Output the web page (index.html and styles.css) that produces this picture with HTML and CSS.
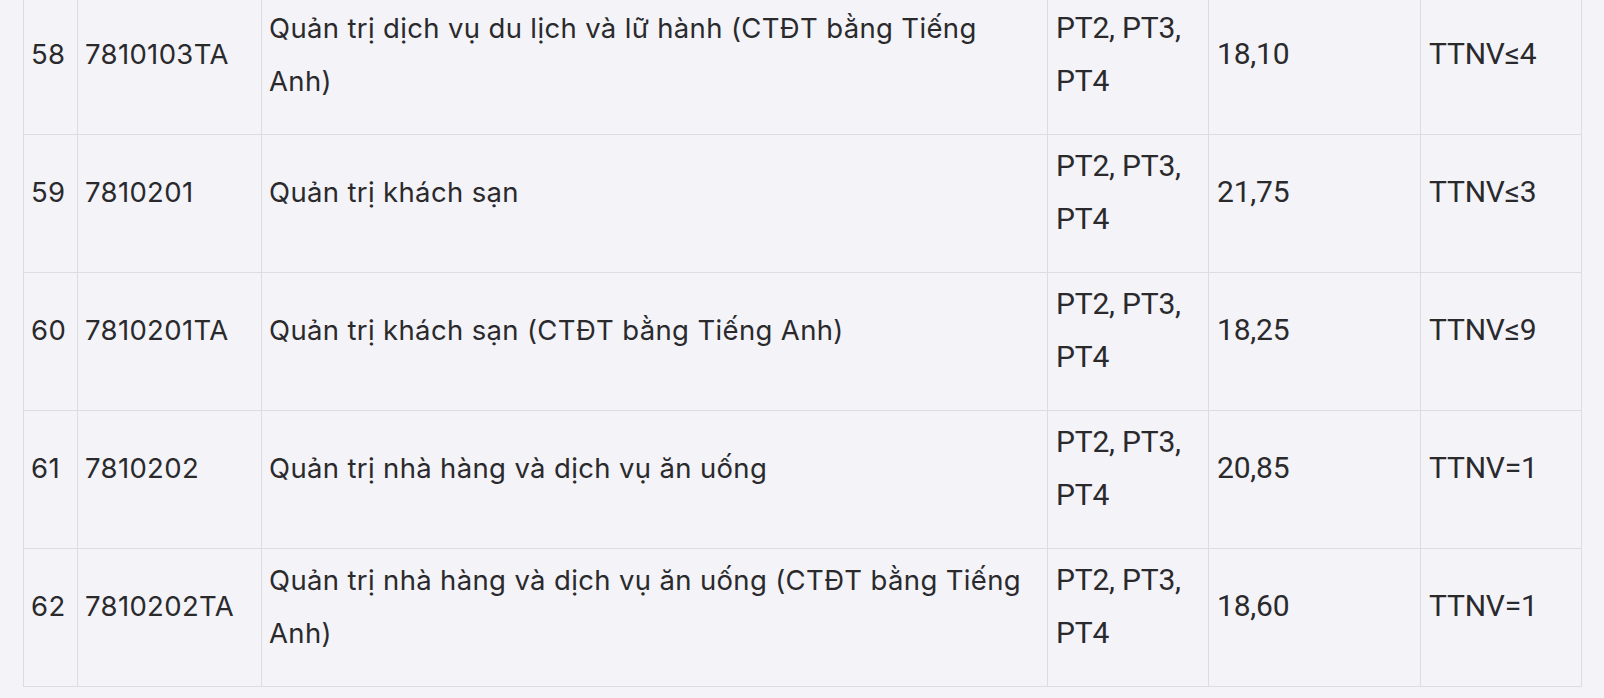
FILE: index.html
```html
<!DOCTYPE html>
<html lang="vi">
<head>
<meta charset="utf-8">
<title>Điểm chuẩn</title>
<link rel="stylesheet" href="styles.css">
</head>
<body>
<div class="page">
  <table class="scores">
    <colgroup>
      <col class="c-stt"><col class="c-code"><col class="c-name"><col class="c-method"><col class="c-score"><col class="c-cond">
    </colgroup>
    <tbody>
      <tr>
        <td class="sans">58</td>
        <td class="sans">7810103TA</td>
        <td class="sans">Quản trị dịch vụ du lịch và lữ hành (CTĐT bằng Tiếng Anh)</td>
        <td class="alt">PT2, PT3, PT4</td>
        <td class="alt">18,10</td>
        <td class="alt">TTNV≤4</td>
      </tr>
      <tr>
        <td class="sans">59</td>
        <td class="sans">7810201</td>
        <td class="sans">Quản trị khách sạn</td>
        <td class="alt">PT2, PT3, PT4</td>
        <td class="alt">21,75</td>
        <td class="alt">TTNV≤3</td>
      </tr>
      <tr>
        <td class="sans">60</td>
        <td class="sans">7810201TA</td>
        <td class="sans">Quản trị khách sạn (CTĐT bằng Tiếng Anh)</td>
        <td class="alt">PT2, PT3, PT4</td>
        <td class="alt">18,25</td>
        <td class="alt">TTNV≤9</td>
      </tr>
      <tr>
        <td class="sans">61</td>
        <td class="sans">7810202</td>
        <td class="sans">Quản trị nhà hàng và dịch vụ ăn uống</td>
        <td class="alt">PT2, PT3, PT4</td>
        <td class="alt">20,85</td>
        <td class="alt">TTNV=1</td>
      </tr>
      <tr>
        <td class="sans">62</td>
        <td class="sans">7810202TA</td>
        <td class="sans">Quản trị nhà hàng và dịch vụ ăn uống (CTĐT bằng Tiếng Anh)</td>
        <td class="alt">PT2, PT3, PT4</td>
        <td class="alt">18,60</td>
        <td class="alt">TTNV=1</td>
      </tr>
    </tbody>
  </table>
</div>
</body>
</html>
```

FILE: styles.css
```css
html, body {
  margin: 0;
  padding: 0;
  background: #f3f3f8;
}

.page {
  padding: 0 23px;
  margin-top: -4px;
}

.scores {
  border-collapse: collapse;
  table-layout: fixed;
  width: 1558px;
  color: #2a2a2d;
}

.c-stt { width: 54px; }
.c-code { width: 184px; }
.c-name { width: 786px; }
.c-method { width: 161px; }
.c-score { width: 212px; }
.c-cond { width: 161px; }

.scores td {
  border: 1px solid #dcdce2;
  padding: 5px 8px 27px 8px;
  vertical-align: middle;
  line-height: 52.5px;
  font-size: 26px;
}

.scores td.sans {
  font-family: "Inter", "Noto Sans", sans-serif;
  font-size: 27.5px;
  letter-spacing: 0.35px;
  padding-left: 7px;
  padding-right: 6px;
}

.scores td.alt {
  font-family: "Roboto", "Liberation Sans", sans-serif;
  font-size: 30px;
  letter-spacing: -0.2px;
}
```
